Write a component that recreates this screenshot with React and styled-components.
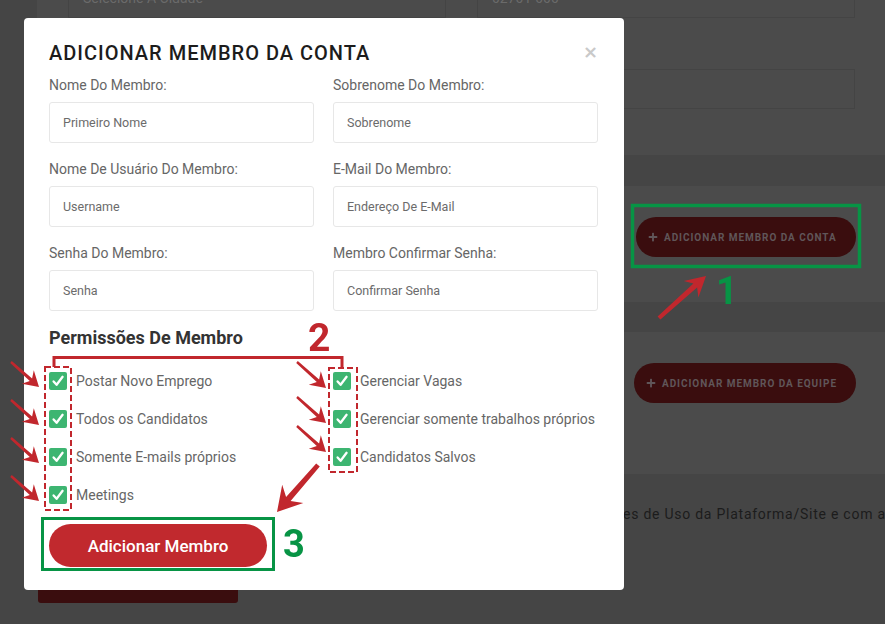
import React from 'react';
import styled, { createGlobalStyle } from 'styled-components';
import { FaPlus } from 'react-icons/fa';

const GlobalStyle = createGlobalStyle`
  html, body {
    margin: 0;
    padding: 0;
  }
  body {
    width: 885px;
    height: 624px;
    overflow: hidden;
    background: #454545;
    font-family: Roboto, "Liberation Sans", sans-serif;
  }
`;

/* ---------- dimmed page behind the modal ---------- */

const Page = styled.div`
    display: flex;
    flex-direction: column;
    padding-left: 37px;
`;

const TopCard = styled.section`
    background: #4b4b4b;
    margin-top: -30px;
    height: 185px;
    box-sizing: border-box;
    padding: 8px 30px 0 31px;
    display: grid;
    grid-template-columns: 378px 378px;
    column-gap: 31px;
    row-gap: 51px;
    align-content: start;
`;

const GhostField = styled.div`
    grid-column: ${p => p.$col || 'auto'};
    height: 40px;
    box-sizing: border-box;
    border: 1px solid #444;
    display: flex;
    align-items: center;
    padding: 0 14px;
    color: #6a6a6a;
    font-size: 14px;
`;

const Card = styled.section`
    background: #4b4b4b;
    height: ${p => p.$h}px;
    margin-top: ${p => p.$gap}px;
    box-sizing: border-box;
    padding: 31px 29px 0 0;
    display: flex;
    justify-content: flex-end;
    align-items: flex-start;
`;

const GhostButton = styled.div`
    width: ${p => p.$w}px;
    height: 40px;
    box-sizing: border-box;
    border-radius: 20px;
    background: #3a0d0e;
    display: flex;
    align-items: center;
    gap: 6px;
    padding-left: 12px;
    color: #605659;
    font-size: 10px;
    font-weight: 700;
    letter-spacing: 0.95px;
    white-space: nowrap;
`;

const Footer = styled.div`
    padding: 30px 0 0 1px;
    display: flex;
    flex-direction: column;
    overflow: hidden;
`;

const Terms = styled.p`
    margin: 0;
    padding-left: 118px;
    font-size: 14px;
    line-height: 20px;
    letter-spacing: 0.75px;
    color: #1c1c1c;
    white-space: nowrap;
`;

const GhostSubmit = styled.div`
    width: 200px;
    height: 46px;
    margin-top: 33px;
    border-radius: 3px;
    background: #3a0d0e;
`;

/* ---------- modal ---------- */

const Overlay = styled.div`
    position: fixed;
    inset: 0;
    padding: 18px 0 0 24px;
`;

const Modal = styled.div`
    width: 600px;
    box-sizing: border-box;
    background: #fff;
    border-radius: 4px;
    padding: 23px 26px 23px 25px;
`;

const Header = styled.div`
    display: flex;
    justify-content: space-between;
    align-items: flex-start;
`;

const Title = styled.h2`
    margin: 0;
    font-size: 20px;
    line-height: 24px;
    font-weight: 500;
    letter-spacing: 1px;
    color: #1c1c1c;
`;

const Close = styled.span`
    font-family: "DejaVu Sans", sans-serif;
    font-size: 18px;
    font-weight: 700;
    line-height: 16px;
    margin-top: 3px;
    color: #c9c9c9;
`;

const FormGrid = styled.div`
    margin-top: 10px;
    display: grid;
    grid-template-columns: 265px 265px;
    column-gap: 19px;
`;

const Field = styled.label`
    display: flex;
    flex-direction: column;
`;

const Label = styled.span`
    font-size: 14px;
    line-height: 20px;
    color: #666;
    margin-bottom: 7px;
`;

const Input = styled.input`
    height: 41px;
    box-sizing: border-box;
    margin: 0 0 16px;
    border: 1px solid #e7e7e7;
    border-radius: 3px;
    padding: 0 13px;
    font-family: Roboto, "Liberation Sans", sans-serif;
    font-size: 12.5px;
    color: #555;
    outline: none;
    &::placeholder {
        color: #6b6b6b;
        opacity: 1;
    }
`;

const Heading = styled.h3`
    margin: 0;
    font-size: 18px;
    line-height: 22px;
    font-weight: 700;
    color: #333;
`;

const PermGrid = styled.div`
    margin-top: 20px;
    display: grid;
    grid-template-columns: 265px 265px;
    column-gap: 19px;
`;

const PermColumn = styled.div`
    display: flex;
    flex-direction: column;
    gap: 14px;
`;

const Perm = styled.div`
    height: 24px;
    display: flex;
    align-items: center;
    gap: 9px;
    font-size: 14px;
    color: #666;
    white-space: nowrap;
`;

const Box = styled.span`
    width: 18px;
    height: 18px;
    border-radius: 2px;
    background: #3db571;
    display: flex;
    align-items: center;
    justify-content: center;
`;

const Submit = styled.button`
    margin-top: 17px;
    width: 218px;
    height: 43px;
    border: none;
    border-radius: 22px;
    background: #c1292e;
    color: #fff;
    font-family: Roboto, "Liberation Sans", sans-serif;
    font-size: 17px;
    font-weight: 500;
`;

/* ---------- annotations drawn over the screenshot ---------- */

const Notes = styled.svg`
    position: fixed;
    left: 0;
    top: 0;
    pointer-events: none;
`;

const RED = '#c1272d';
const GREEN = '#079445';

function arrowPoints(x1, y1, x2, y2, w, hl, hw) {
    const dx = x2 - x1, dy = y2 - y1, L = Math.hypot(dx, dy);
    const ux = dx / L, uy = dy / L, nx = -uy, ny = ux;
    const pt = (a, b) => `${(x1 + ux * a + nx * b).toFixed(1)},${(y1 + uy * a + ny * b).toFixed(1)}`;
    return [
        pt(0, -w / 2 + 0.6), pt(L - hl * 0.72, -w / 2), pt(L - hl, -hw), pt(L, 0),
        pt(L - hl, hw), pt(L - hl * 0.72, w / 2), pt(0, w / 2 - 0.6),
    ].join(' ');
}

const Arrow = ({ from, to, w = 3.5, hl = 15, hw = 9 }) => (
    <polygon points={arrowPoints(from[0], from[1], to[0], to[1], w, hl, hw)} fill={RED} />
);

const Check = () => (
    <svg width="14" height="14" viewBox="0 0 14 14">
        <path d="M2.6 7.4 L5.6 10.8 L11.6 2.8" fill="none" stroke="#fff" strokeWidth="2.3" strokeLinecap="round" strokeLinejoin="round" />
    </svg>
);

const left = ['Postar Novo Emprego', 'Todos os Candidatos', 'Somente E-mails próprios', 'Meetings'];
const right = ['Gerenciar Vagas', 'Gerenciar somente trabalhos próprios', 'Candidatos Salvos'];

const fields = [
    ['Nome Do Membro:', 'Primeiro Nome'],
    ['Sobrenome Do Membro:', 'Sobrenome'],
    ['Nome De Usuário Do Membro:', 'Username'],
    ['E-Mail Do Membro:', 'Endereço De E-Mail'],
    ['Senha Do Membro:', 'Senha'],
    ['Membro Confirmar Senha:', 'Confirmar Senha'],
];

export default function App() {
    return (
        <>
            <GlobalStyle />
            <Page>
                <TopCard>
                    <GhostField>Selecione A Cidade</GhostField>
                    <GhostField>02701-000</GhostField>
                    <GhostField $col="2" />
                </TopCard>
                <Card $h={116} $gap={31}>
                    <GhostButton $w={220}><FaPlus size={10} />ADICIONAR MEMBRO DA CONTA</GhostButton>
                </Card>
                <Card $h={142} $gap={30}>
                    <GhostButton $w={222}><FaPlus size={10} />ADICIONAR MEMBRO DA EQUIPE</GhostButton>
                </Card>
                <Footer>
                    <Terms>Ao adicionar um membro, você concorda com os Termos e Condições de Uso da Plataforma/Site e com a Política de Privacidade.</Terms>
                    <GhostSubmit />
                </Footer>
            </Page>

            <Overlay>
                <Modal>
                    <Header>
                        <Title>ADICIONAR MEMBRO DA CONTA</Title>
                        <Close>×</Close>
                    </Header>
                    <FormGrid>
                        {fields.map(([label, ph]) => (
                            <Field key={label}>
                                <Label>{label}</Label>
                                <Input placeholder={ph} />
                            </Field>
                        ))}
                    </FormGrid>
                    <Heading>Permissões De Membro</Heading>
                    <PermGrid>
                        <PermColumn>
                            {left.map(t => <Perm key={t}><Box><Check /></Box>{t}</Perm>)}
                        </PermColumn>
                        <PermColumn>
                            {right.map(t => <Perm key={t}><Box><Check /></Box>{t}</Perm>)}
                        </PermColumn>
                    </PermGrid>
                    <Submit>Adicionar Membro</Submit>
                </Modal>
            </Overlay>

            <Notes width="885" height="624" viewBox="0 0 885 624">
                <rect x="45" y="367" width="26" height="143" fill="none" stroke={RED} strokeWidth="2" strokeDasharray="6 3" />
                <rect x="329" y="368" width="28" height="104" fill="none" stroke={RED} strokeWidth="2" strokeDasharray="6 3" />
                <path d="M54 367 V357.5 H342 V368" fill="none" stroke={RED} strokeWidth="3" />
                {[0, 1, 2, 3].map(i => <Arrow key={i} from={[11, 362 + i * 38]} to={[39, 387 + i * 38]} />)}
                <Arrow from={[297, 362]} to={[326, 388]} />
                <Arrow from={[297, 397]} to={[326, 423]} />
                <Arrow from={[297, 426]} to={[326, 452]} />
                <Arrow from={[318, 465]} to={[277, 512]} w={6} hl={24} hw={14} />
                <Arrow from={[659, 318]} to={[706, 276]} w={5.5} hl={20} hw={11} />
                <rect x="632.5" y="205.5" width="227" height="61" fill="none" stroke={GREEN} strokeWidth="3.5" />
                <rect x="42.5" y="518.5" width="231" height="51" fill="none" stroke={GREEN} strokeWidth="3" />
                <text x="308" y="351" fill={RED} fontFamily="Roboto, sans-serif" fontWeight="700" fontSize="39">2</text>
                <text x="716" y="304" fill={GREEN} fontFamily="Roboto, sans-serif" fontWeight="700" fontSize="38">1</text>
                <text x="283" y="557" fill={GREEN} fontFamily="Roboto, sans-serif" fontWeight="700" fontSize="38">3</text>
            </Notes>
        </>
    );
}
